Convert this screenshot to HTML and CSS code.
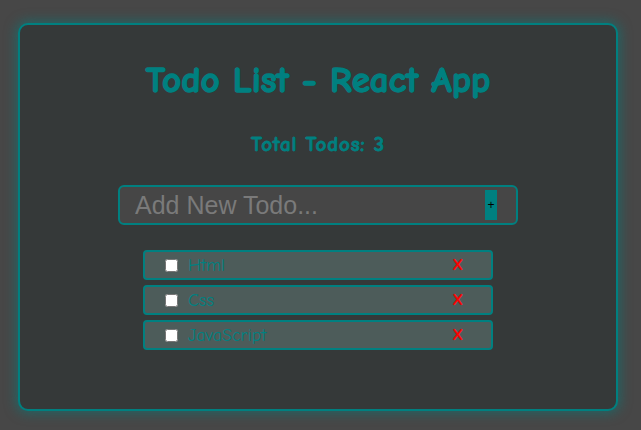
FILE: index.html
```html
<!DOCTYPE html>
<html>
<head>
<meta charset="utf-8">
<link rel="stylesheet" href="styles.css">
</head>
<body>
<div class="card">
  <h1 class="title">Todo List - React App</h1>
  <p class="total">Total Todos: 3</p>
  <form class="add-form">
    <input class="add-input" type="text" placeholder="Add New Todo...">
    <button class="add-btn" type="button">+</button>
  </form>
  <ul class="list">
    <li class="item"><input class="check" type="checkbox"><span class="text">Html</span><span class="del">X</span></li>
    <li class="item"><input class="check" type="checkbox"><span class="text">Css</span><span class="del">X</span></li>
    <li class="item"><input class="check" type="checkbox"><span class="text">JavaScript</span><span class="del">X</span></li>
  </ul>
</div>
</body>
</html>
```
FILE: styles.css
```css
html, body {
  margin: 0;
  padding: 0;
  background: #474747;
  width: 641px;
  height: 430px;
  overflow: hidden;
}
body {
  font-family: "Comic Sans MS", "Comic Neue", cursive;
  padding-top: 23px;
  box-sizing: border-box;
}
.card {
  box-sizing: border-box;
  margin-left: 18px;
  width: 600px;
  height: 388px;
  background: #353939;
  border: 2px solid #008080;
  border-radius: 10px;
  box-shadow: 0 0 12px 2px rgba(0, 128, 128, 0.55);
  display: flex;
  flex-direction: column;
  align-items: center;
}
.title {
  margin: 33px 0 0;
  font-size: 37px;
  line-height: 44px;
  font-weight: bold;
  color: #008080;
  -webkit-text-stroke: 1.4px #008080;
  letter-spacing: 0;
}
.total {
  margin: 30px 0 0;
  font-size: 21px;
  line-height: 24px;
  font-weight: bold;
  color: #008080;
  -webkit-text-stroke: 0.8px #008080;
  letter-spacing: 0.8px;
}
.add-form {
  margin-top: 29px;
  box-sizing: border-box;
  width: 400px;
  height: 40px;
  border: 2px solid #008080;
  border-radius: 6px;
  background: #464646;
  display: flex;
  align-items: center;
  padding: 0 19px 0 15px;
}
.add-input {
  flex: 1;
  min-width: 0;
  border: none;
  outline: none;
  background: transparent;
  padding: 0;
  font-family: "Liberation Sans", Arial, sans-serif;
  font-size: 25px;
  color: #cccccc;
}
.add-input::placeholder {
  color: #7a7a7a;
}
.add-btn {
  width: 12px;
  height: 30px;
  padding: 0;
  border: none;
  background: #008080;
  color: #000;
  font-family: "Liberation Sans", Arial, sans-serif;
  font-size: 12px;
  line-height: 30px;
}
.list {
  list-style: none;
  margin: 25px 0 0;
  padding: 0;
  width: 350px;
  display: flex;
  flex-direction: column;
  gap: 5px;
}
.item {
  box-sizing: border-box;
  height: 30px;
  border: 2px solid #008080;
  border-radius: 4px;
  background: #4d5c5a;
  display: flex;
  align-items: center;
  padding: 0 28px 0 20px;
}
.check {
  margin: 0 10px 0 0;
  width: 13px;
  height: 13px;
}
.text {
  flex: 1;
  font-size: 18px;
  color: #008080;
}
.del {
  color: #ff0000;
  font-size: 15px;
  font-weight: bold;
  -webkit-text-stroke: 0.3px #ff0000;
}
```
